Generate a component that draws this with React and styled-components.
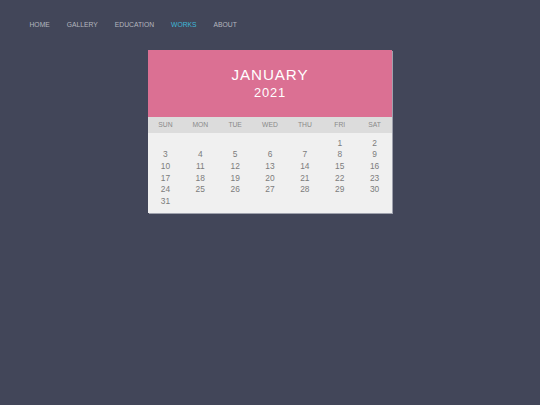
import React from "react";
import styled, { createGlobalStyle } from "styled-components";

const Global = createGlobalStyle`
  html, body { margin: 0; padding: 0; background: #424659; }
  body { font-family: "Liberation Sans", Arial, sans-serif; width: 540px; height: 405px; overflow: hidden; }
`;

const Page = styled.div`
  width: 540px;
  height: 405px;
  background: #424659;
  display: flex;
  flex-direction: column;
`;

const Nav = styled.nav`
  display: flex;
  gap: 17px;
  padding: 20px 0 0 29.5px;
  height: 30px;
  box-sizing: border-box;
`;

const NavItem = styled.a`
  font-size: 6.75px;
  line-height: 9px;
  color: ${(p) => (p.$active ? "#3fb8d8" : "#b4b6bf")};
  text-transform: uppercase;
  text-decoration: none;
`;

const Card = styled.div`
  margin: 19.5px 0 0 148px;
  width: 244px;
  background: #f0f0f0;
  box-shadow: 1px 1px 0 #9ea1ad;
`;

const Header = styled.div`
  background: #db7093;
  height: 67.5px;
  color: #fff;
  display: flex;
  flex-direction: column;
  align-items: center;
  box-sizing: border-box;
  padding-top: 16px;
`;

const Month = styled.div`
  font-size: 15.2px;
  letter-spacing: 0.9px;
  line-height: 18px;
`;

const Year = styled.div`
  font-size: 12.9px;
  letter-spacing: 0.8px;
  line-height: 15px;
  margin-top: 1px;
`;

const Weekdays = styled.div`
  display: grid;
  grid-template-columns: repeat(7, 1fr);
  background: #dcdcdc;
  height: 15.5px;
  align-items: center;
  padding: 0 0 0 0;
`;

const Wd = styled.div`
  font-size: 6.75px;
  color: #8a8a8a;
  text-align: center;
`;

const Days = styled.div`
  display: grid;
  grid-template-columns: repeat(7, 1fr);
  grid-auto-rows: 11.7px;
  padding: 5.2px 0 5px 0;
  align-items: center;
`;

const Day = styled.div`
  font-size: 8.4px;
  color: #7c7c7c;
  text-align: center;
  line-height: 11.7px;
`;

const names = ["Home", "Gallery", "Education", "Works", "About"];
const wds = ["SUN", "MON", "TUE", "WED", "THU", "FRI", "SAT"];

export default function App() {
  const cells = [];
  for (let i = 0; i < 5; i++) cells.push(null);
  for (let d = 1; d <= 31; d++) cells.push(d);
  return (
    <Page>
      <Global />
      <Nav>
        {names.map((n) => (
          <NavItem key={n} $active={n === "Works"}>{n}</NavItem>
        ))}
      </Nav>
      <Card>
        <Header>
          <Month>JANUARY</Month>
          <Year>2021</Year>
        </Header>
        <Weekdays>
          {wds.map((w) => (
            <Wd key={w}>{w}</Wd>
          ))}
        </Weekdays>
        <Days>
          {cells.map((d, i) => (
            <Day key={i}>{d ?? ""}</Day>
          ))}
        </Days>
      </Card>
    </Page>
  );
}
